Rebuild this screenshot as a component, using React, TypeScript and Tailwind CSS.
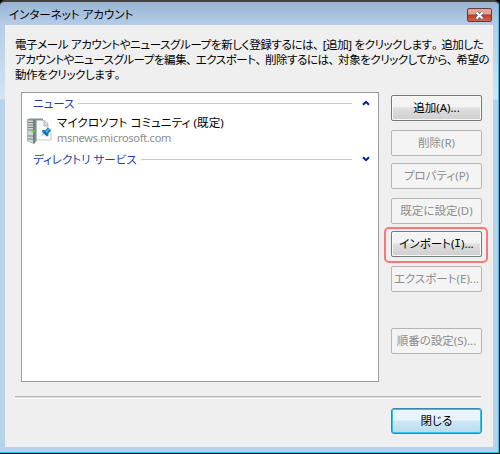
import type { ReactNode } from 'react';

function Chevron({ down = false }: { down?: boolean }) {
  return (
    <svg width="8" height="6" viewBox="0 0 8 6" className={down ? 'rotate-180' : ''}>
      <path d="M1 4.7 4 1.8l3 2.9" fill="none" stroke="#0a1c9c" strokeWidth="2" />
    </svg>
  );
}

function GroupHeader({ label, down = false }: { label: string; down?: boolean }) {
  return (
    <div className="flex h-4 items-center pr-[8px] pl-[11px] text-[#1c42a6]">
      <span>{label}</span>
      <span className="mr-[10px] ml-1 h-px flex-1 bg-[#bcc8e6]" />
      <Chevron down={down} />
    </div>
  );
}

function ServerIcon() {
  return (
    <svg width="27" height="30" viewBox="0 0 27 30" className="shrink-0">
      <path d="M10 5.5h9.500l2.200 2v5.500l3.500 5V25H10z" fill="#f8fafb" stroke="#b9bdc0" strokeWidth=".8" />
      <path d="M18 6v5h4.500z" fill="#dfe3e5" stroke="#a2a5a8" strokeWidth=".7" />
      <path d="M1 4.500 4 3.500h13v1.500h-6.500V26L8 29l-7-3z" fill="#878f92" />
      <path d="M1.500 5.500H7V28l-5.500-2z" fill="#d2d8d8" />
      <path d="M2 7.500h5M2 10h5M2 12.500h5M2 15h5M2 21h5M2 24h5" stroke="#767f81" strokeWidth="1" />
      <path d="M8 5v23" stroke="#687174" />
      <path d="M5.500 15.500h3v2h-3z" fill="#5fe22f" />
      <path d="m16 20.500 3-3" stroke="#6d7982" />
      <path d="m16.500 15 2.800.3 2.700-2.800 3.300 2.800-2.800 3-.2 2.500-1.500.8-4.700-4.700z" fill="#1676bd" />
      <path d="m19.500 16.500 3-3 1.200 1-3 3z" fill="#62b7e7" />
    </svg>
  );
}

function Line({ text, tight = false }: { text: string; tight?: boolean }) {
  return (
    <span className={`block w-max ${tight ? 'tracking-[-0.46px]' : 'tracking-[-0.38px]'}`}>
      {text.split(/([、。])/).map((part, i) =>
        part === '、' || part === '。' ? (
          <span key={i} className="inline-block w-[9.5px]">{part}</span>
        ) : (
          part
        ),
      )}
    </span>
  );
}

function Button({ children, enabled = false, gap = 'mt-[9px]' }: { children: ReactNode; enabled?: boolean; gap?: string }) {
  return (
    <button
      className={`${gap} flex h-[26px] w-[91px] shrink-0 items-center justify-center rounded-[2px] border pb-px whitespace-nowrap ${
        enabled
          ? 'border-[#777] bg-linear-to-b from-[#f3f3f3] from-45% via-[#dfdfdf] via-50% to-[#cfcfcf] text-black shadow-[inset_0_0_0_1px_#f8f8f8]'
          : 'border-[#b5b5b5] bg-[#f4f4f4] text-[#8c8c8c]'
      }`}
    >
      {children}
    </button>
  );
}

export default function App() {
  return (
    <div className="h-[454px] w-[500px] overflow-hidden bg-black font-['Noto_Sans','Noto_Sans_CJK_JP',sans-serif] text-[11.5px] leading-[15px] text-black [font-feature-settings:'palt']">
      <div className="flex h-[453px] w-[499px] flex-col overflow-hidden rounded-t-[5px] border-t-2 border-r border-b border-t-[#434343] border-r-[#32c6ea] border-b-[#27c6e9] bg-[linear-gradient(to_bottom,#98b4d2_0px,#b5cde7_23px,#d3e4f5_97px,#b8d2ec_98px)] pr-[5px] pl-[5px]">
        <header className="flex h-[23px] shrink-0 items-center justify-between pr-px pl-1">
          <span className="pt-px">インターネット アカウント</span>
          <button className="mt-[3px] flex h-[14px] w-[25px] items-center justify-center rounded-[2px] border border-[#6c3541] bg-linear-to-b from-[#dfa397] from-40% via-[#bd3824] via-50% to-[#cf654b]">
            <svg width="11" height="9" viewBox="0 0 11 9">
              <path d="m2.5 1.5 6 6m0-6-6 6" stroke="#56606c" strokeWidth="3.6" />
              <path d="m2.5 1.5 6 6m0-6-6 6" stroke="#fff" strokeWidth="2" />
            </svg>
          </button>
        </header>
        <main className="flex h-[422px] shrink-0 flex-col bg-[#efefef] pr-[4px] pl-[10px]">
          <p className="mt-[12px] h-[55px] leading-[15px] whitespace-nowrap">
            <Line text="電子メール アカウントやニュースグループを新しく登録するには、[追加] をクリックします。追加した" />
            <Line tight text="アカウントやニュースグループを編集、エクスポート、削除するには、対象をクリックしてから、希望の" />
            <Line text="動作をクリックします。" />
          </p>
          <div className="flex">
            <section className="ml-[6px] h-[290px] w-[358px] border border-[#9a9ba3] bg-white pt-[2px]">
              <GroupHeader label="ニュース" />
              <div className="mt-[4px] flex h-[34px] items-start pl-[4px]">
                <ServerIcon />
                <div className="ml-[4px]">
                  <div className="h-[15px] tracking-[0.1px]">マイクロソフト コミュニティ (既定)</div>
                  <div className="text-[11px] tracking-[-0.27px] text-[#8c8c8c]">msnews.microsoft.com</div>
                </div>
              </div>
              <div className="mt-[2px]">
                <GroupHeader label="ディレクトリ サービス" down />
              </div>
            </section>
            <div className="ml-[12px] flex flex-col pt-[3px]">
              <Button enabled gap="mt-0">追加(A)...</Button>
              <Button>削除(R)</Button>
              <Button gap="mt-[7px]">プロパティ(P)</Button>
              <Button>既定に設定(D)</Button>
              <div className="relative mt-[7px]">
                <Button enabled gap="mt-0">インポート(<span className="font-['DejaVu_Sans_Mono'] text-[11px]">I</span>)...</Button>
                <div className="absolute -top-[4px] -left-[7px] h-[36px] w-[104px] rounded-[5px] border-2 border-[#f87878]" />
              </div>
              <Button>エクスポート(E)...</Button>
              <Button gap="mt-9">順番の設定(S)...</Button>
            </div>
          </div>
          <div className="mt-[14px] h-[3px] w-[466px] shrink-0 border-t border-b border-t-[#b9b9b9] border-b-white bg-[#dedede]" />
          <button className="mt-[9px] mr-[7px] flex h-[26px] w-[91px] shrink-0 items-center justify-center self-end rounded-[3px] border border-[#3b86a8] bg-linear-to-b from-[#eaf5fb] from-45% via-[#cfe8f4] via-50% to-[#b8dbed] pb-px shadow-[inset_0_0_0_1px_#31c5ee]">
            閉じる
          </button>
        </main>
      </div>
    </div>
  );
}
